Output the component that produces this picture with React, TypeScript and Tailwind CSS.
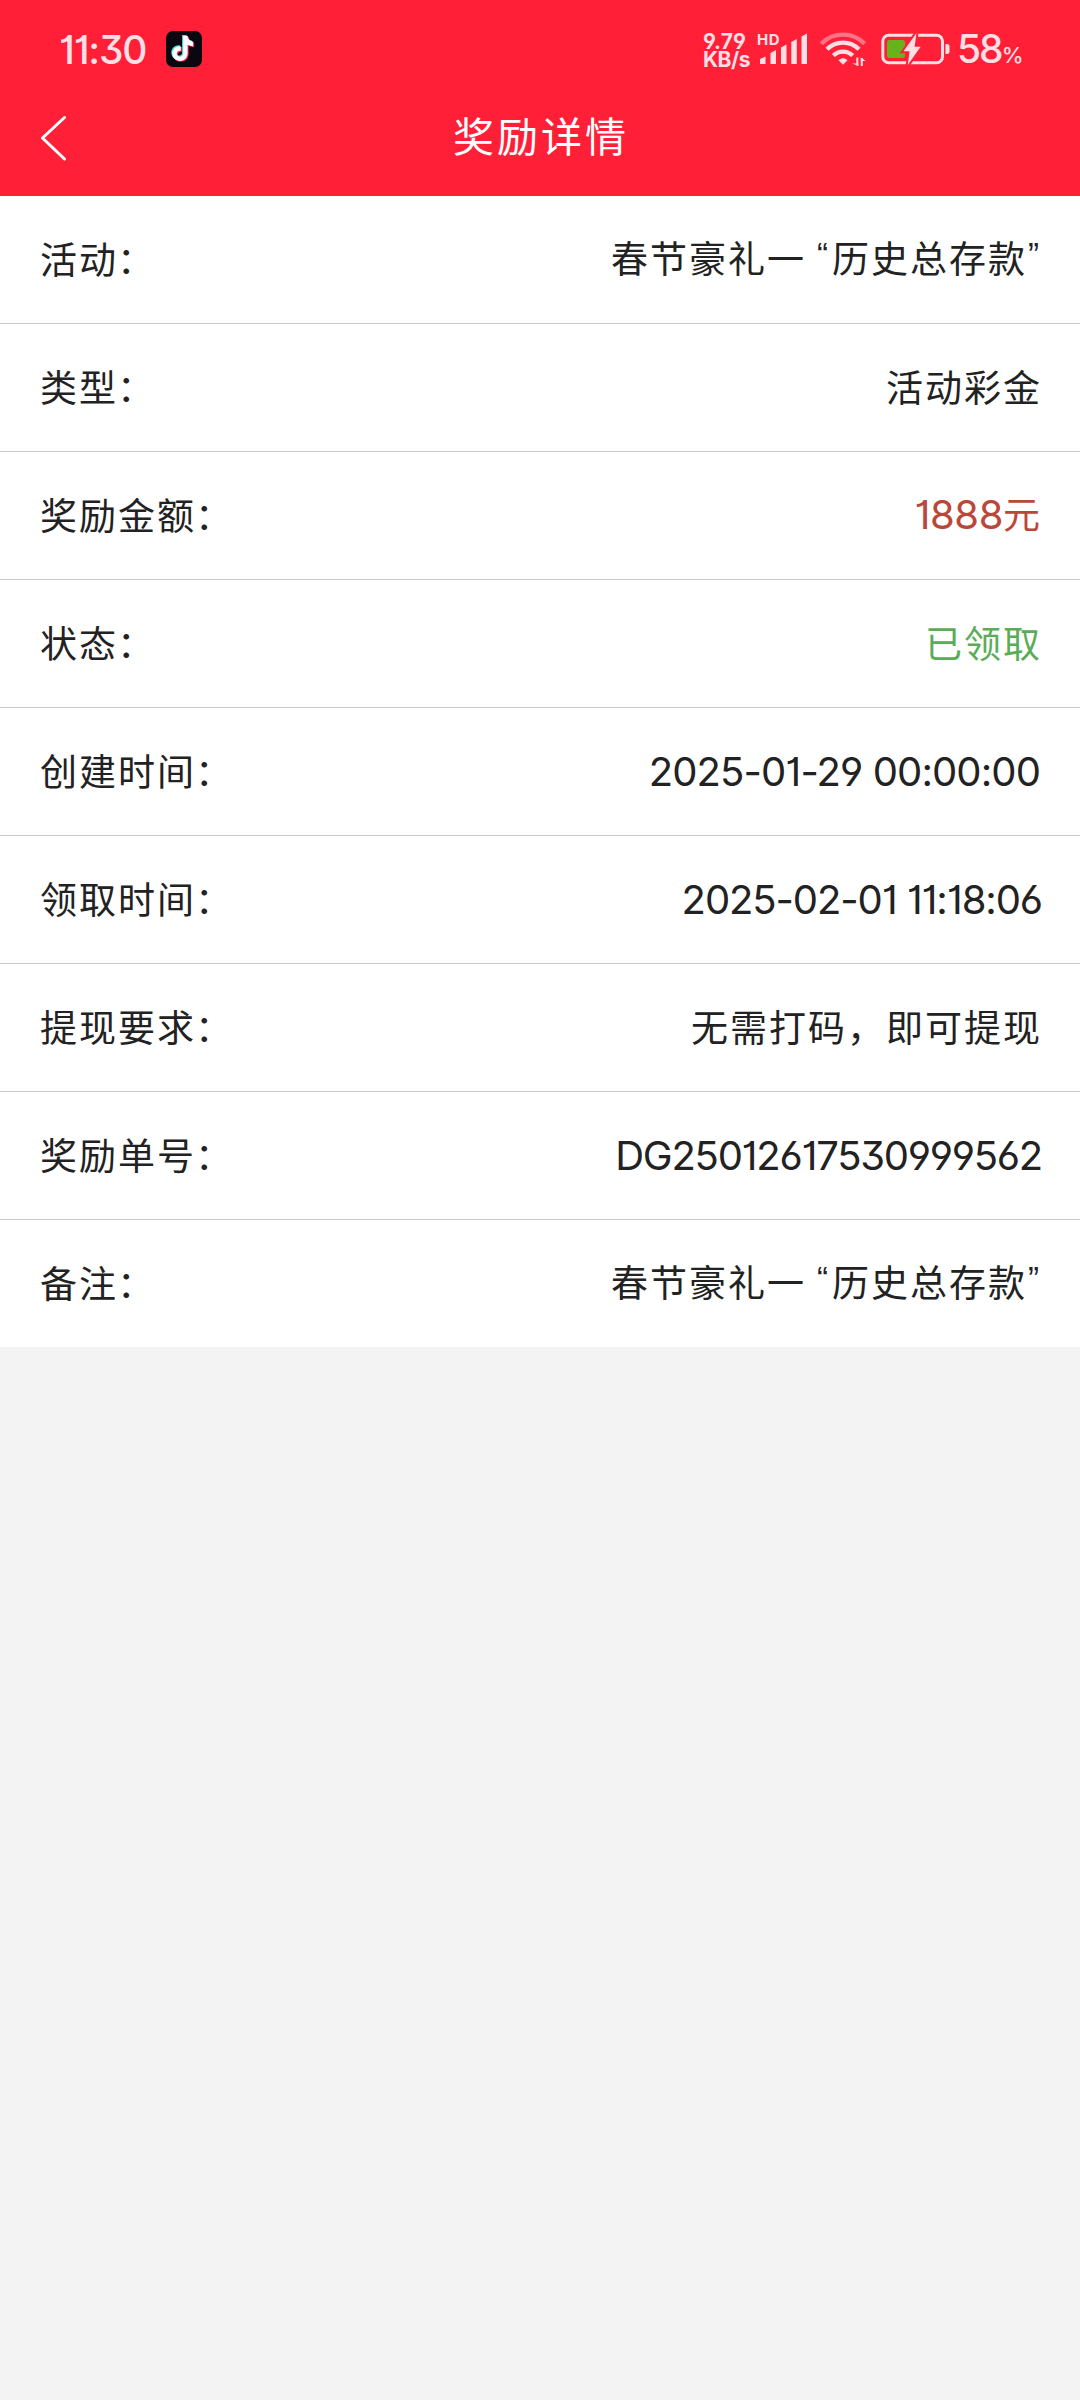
import React from 'react';

interface DetailRow {
  label: string;
  value: React.ReactNode;
  className?: string;
}

const CJK = "font-['Noto_Sans_CJK_SC',sans-serif]";
const LATIN = "font-['Inter','Noto_Sans_CJK_SC',sans-serif] [font-feature-settings:'ss01','cv01']";

const promoName = (
  <>
    春节豪礼一
    <span className="relative -top-[7px] ml-[11px] mr-[2px] font-['Liberation_Sans',sans-serif] text-[33px]">“</span>
    历史总存款
    <span className="relative -top-[7px] ml-px mr-px font-['Liberation_Sans',sans-serif] text-[33px]">”</span>
  </>
);

const rows: DetailRow[] = [
  { label: '活动', value: promoName, className: 'pb-[3px]' },
  { label: '类型', value: '活动彩金', className: 'pb-[3px]' },
  {
    label: '奖励金额',
    value: (
      <>
        <span className={`${LATIN} text-[40px] tracking-[-0.4px]`}>1888</span>元
      </>
    ),
    className: 'pb-0.5 text-[#b9473a]',
  },
  { label: '状态', value: '已领取', className: 'pb-[3px] text-[#5aad57]' },
  {
    label: '创建时间',
    value: <span className={`${LATIN} mr-0.5 text-[40px] tracking-[-0.9px]`}>2025-01-29 00:00:00</span>,
  },
  {
    label: '领取时间',
    value: <span className={`${LATIN} text-[40px] tracking-[-1.1px]`}>2025-02-01 11:18:06</span>,
  },
  { label: '提现要求', value: '无需打码，即可提现', className: 'pb-[3px]' },
  {
    label: '奖励单号',
    value: <span className={`${LATIN} text-[40px] tracking-[-1.25px]`}>DG25012617530999562</span>,
  },
  { label: '备注', value: promoName, className: 'pb-[3px]' },
];

function TikTokIcon() {
  const note = 'M17.6 6.5h4.2c.4 3 2.3 5 5.2 5.300v4.300c-2 0-3.700-.6-5.200-1.600v8.200c0 4.200-3.200 7.300-7.200 7.300s-7.200-3.100-7.200-7c0-4.200 3.500-7.300 8-6.900v4.400c-2-.5-3.700.7-3.700 2.500 0 1.700 1.300 2.900 2.900 2.900 1.800 0 3-1.300 3-3.200z';
  return (
    <svg width="36" height="36" viewBox="0 0 36 36" className="ml-5 shrink-0">
      <rect width="36" height="36" rx="7" fill="#0a0711" />
      <g transform="translate(-1.500 -1.800) scale(1.060)">
        <path d={note} fill="#45e6df" transform="translate(-1 -1)" />
        <path d={note} fill="#f5264e" transform="translate(1 .8)" />
        <path d={note} fill="#fff" />
      </g>
    </svg>
  );
}

function SignalIcon() {
  return (
    <svg width="48" height="32" viewBox="760 34 48 32" fill="#ffdfe4">
      <path d="M760 65v-5l5.500-2.500V65z" />
      <path d="M770.500 65V54l5.500-3V65z" />
      <path d="M781 65V48.500l5.500-3V65z" />
      <path d="M791.300 65V43l5.500-3V65z" />
      <path d="M801.500 65V37.500l5.500-3V65z" />
    </svg>
  );
}

function WifiIcon() {
  return (
    <svg width="48" height="36" viewBox="819 32 48 36" fill="none" stroke="#ffdfe4" strokeWidth="4.300">
      <path d="M821.300 44.700a30.600 30.600 0 0 1 43.400 0" stroke="#ff7385" />
      <path d="M827 50.300a22.500 22.500 0 0 1 32 0" />
      <path d="M833.300 56.600a13.600 13.600 0 0 1 19.400 0" />
      <path d="M839 61.300a6.500 6.500 0 0 1 8 0l-4 4z" fill="#ffdfe4" strokeWidth="1" strokeLinejoin="round" />
      <path d="M857.300 58.500v8M861.800 67v-8" strokeWidth="2" />
      <path d="M858.300 67v-2.500h-6zM860.800 58.500v3.500h5z" fill="#ffdfe4" stroke="none" />
    </svg>
  );
}

function BatteryIcon() {
  return (
    <svg width="70" height="34" viewBox="880 32 70 34">
      <rect x="882.800" y="35.300" width="59.700" height="27.400" rx="6" fill="none" stroke="#ffdfe4" strokeWidth="3" />
      <rect x="887" y="40" width="18" height="18" rx="2.500" fill="#67b31b" />
      <path d="M945.500 44h1.500a2.500 2.500 0 0 1 2.500 2.500v5a2.500 2.500 0 0 1-2.500 2.500h-1.500z" fill="#ffdfe4" />
      <path
        d="M916.500 33L903.500 51.300h6L907.800 65l12.800-18.200h-6z"
        fill="#ffdfe4"
        stroke="#ff2038"
        strokeWidth="4"
        paintOrder="stroke"
      />
    </svg>
  );
}

function StatusBar() {
  return (
    <div className={`${LATIN} flex h-[98px] items-center justify-between pl-[59px] pr-[57px] text-[#ffdfe4]`}>
      <div className="flex items-center">
        <span className="w-[87px] whitespace-nowrap text-[39px] leading-none tracking-[-1.2px] font-medium">11:30</span>
        <TikTokIcon />
      </div>
      <div className="flex items-center">
        <div className="mt-[3px] flex w-[57px] flex-col text-[21px] leading-[18px] font-bold">
          <span className="tracking-[0.2px]">9.79</span>
          <span className="tracking-[-0.5px]">KB/s</span>
        </div>
        <div className="relative mr-[11px]">
          <SignalIcon />
          <span className="absolute -left-[3px] -top-px text-[15px] leading-none tracking-[0.5px] font-bold">HD</span>
        </div>
        <WifiIcon />
        <div className="ml-[13px]">
          <BatteryIcon />
        </div>
        <div className="-mt-0.5 ml-[7px] flex w-[66px] items-baseline leading-none font-medium">
          <span className="text-[39px] tracking-[-2px]">58</span>
          <span className="text-[22px]">%</span>
        </div>
      </div>
    </div>
  );
}

function TitleBar() {
  return (
    <div className="relative flex h-[98px] items-center justify-center">
      <button className="absolute left-10 top-[17px]">
        <svg width="28" height="46" viewBox="0 0 28 46" fill="none" stroke="#fff" strokeWidth="3" strokeLinecap="round" strokeLinejoin="round">
          <path d="M24.500 2.500L2.500 23l22 21" />
        </svg>
      </button>
      <h1 className="-mt-[26px] pl-0.5 text-[41px] leading-none tracking-[3px] text-white">奖励详情</h1>
    </div>
  );
}

export default function App() {
  return (
    <div className={`${CJK} min-h-[2400px] w-[1080px] bg-[#f3f3f3]`}>
      <header className="h-[196px] bg-[#ff2038]">
        <StatusBar />
        <TitleBar />
      </header>

      <main className="bg-white text-[37px] leading-none tracking-[2px] text-[#222]">
        {rows.map((row) => (
          <div
            key={row.label}
            className="flex h-32 items-center justify-between border-b border-[#c8c8c8] px-10 last:h-[127px] last:border-b-0"
          >
            <span className="pb-[3px]">
              {row.label}
              <span className="-ml-px">：</span>
            </span>
            <span className={`-mr-0.5 whitespace-nowrap ${row.className ?? ''}`}>{row.value}</span>
          </div>
        ))}
      </main>
    </div>
  );
}
